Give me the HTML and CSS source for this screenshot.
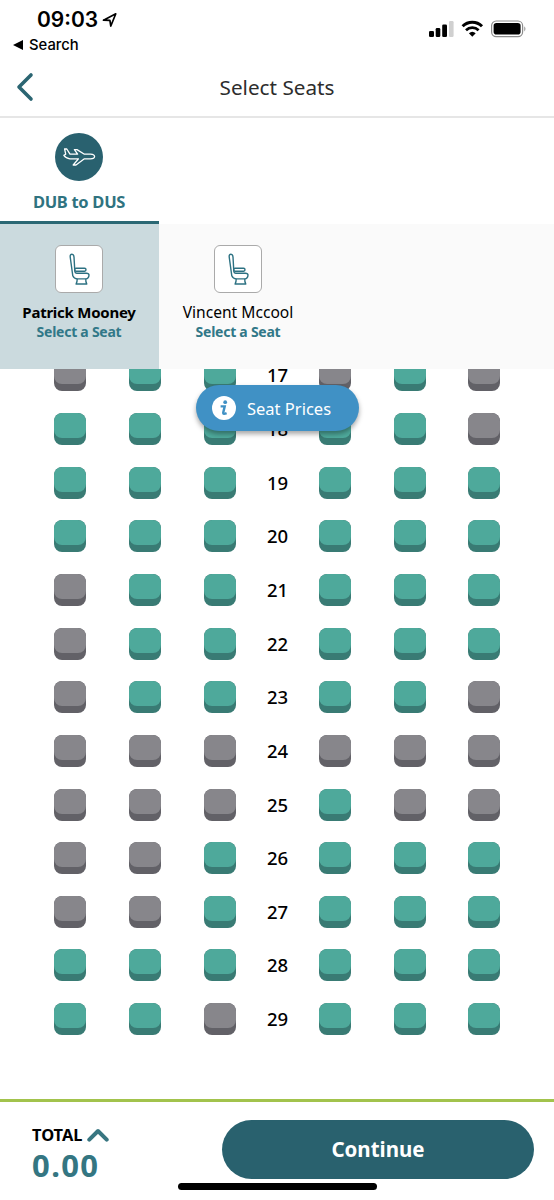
FILE: index.html
```
<!DOCTYPE html>
<html lang="en">
	<head>
		<meta charset="utf-8">
		<title>Select Seats</title>
		<link rel="stylesheet" href="styles.css">
	</head>
	<body>
		<div class="status-bar">
			<div class="status-left">
				<div class="clock">
					<span>09:03</span>
					<svg width="16" height="16" viewBox="0 0 16 16"><path d="M1.5 8.2 L13.8 1.8 L8.8 14 L7.9 8.3 Z" fill="none" stroke="#000" stroke-width="1.7" stroke-linejoin="round"/></svg>
				</div>
				<div class="back-app">
					<svg width="10" height="10" viewBox="0 0 10 10"><path d="M0 5 L10 0 V10 Z"/></svg>
					<span>Search</span>
				</div>
			</div>
			<svg class="status-icons" width="98" height="18" viewBox="0 0 98 18">
				<rect x="0" y="11" width="5" height="6" rx="1.3"/>
				<rect x="6.7" y="8" width="4.6" height="9" rx="1.3"/>
				<rect x="13.2" y="4.5" width="4.8" height="12.5" rx="1.3"/>
				<rect x="20" y="1" width="4.6" height="16" rx="1.3" fill="#d0d0d0"/>
				<path d="M33.6 6.3 A13.8 13.8 0 0 1 53 6.3" fill="none" stroke="#000" stroke-width="3"/>
				<path d="M37 10.2 A9 9 0 0 1 49.6 10.2" fill="none" stroke="#000" stroke-width="2.7"/>
				<path d="M39.9 13.3 A5 5 0 0 1 46.7 13.3 L43.3 16.8 Z"/>
				<rect x="62.6" y="1" width="31" height="15.6" rx="4.6" fill="none" stroke="#8c8c8c" stroke-width="1.2"/>
				<rect x="64.6" y="3" width="27" height="11.6" rx="2.8"/>
				<path d="M95.3 6.2 Q97.6 8.8 95.3 11.4 Z" fill="#8c8c8c"/>
			</svg>
		</div>

		<div class="nav-bar">
			<svg class="nav-back" width="18" height="30" viewBox="0 0 18 30"><path d="M15 3 L3 15 L15 27" fill="none" stroke="#2b6572" stroke-width="3.6" stroke-linecap="round" stroke-linejoin="round"/></svg>
			<h1>Select Seats</h1>
		</div>

		<div class="flight-tab">
			<div class="flight-icon">
				<svg width="34" height="20" viewBox="0 0 34 20"><path d="M2.6 2 H4.8 L8 7.2 H15.6 L12.4 2.6 H15 L22.4 7.2 H28.5 Q32.6 7.5 32.6 9.7 Q32.4 11.6 28.5 11.8 H22.4 L14 18 H11.2 L16.4 11.8 H8 Q4 11.4 1.8 8.4 L3.7 7.2 Z" fill="none" stroke="#fff" stroke-width="1.3" stroke-linejoin="round"/></svg>
			</div>
			<div class="flight-route">DUB to DUS</div>
		</div>

		<div class="passengers">
			<div class="passenger selected">
				<div class="passenger-icon">
					<svg width="22" height="33" viewBox="0 0 22 33"><g fill="none" stroke="#2c7182" stroke-width="1.4" stroke-linejoin="round"><path d="M2.2 4 Q2 1.2 4 1.2 Q5.8 1.2 6 4 L6.8 18 Q7 20.3 9 20.3 H18.3 Q21 20.4 21 22 Q20.8 25.7 17.8 25.9 H9.2 Q6 25.8 4.8 22.8 Z"/><rect x="6.6" y="15.3" width="11.4" height="2.9" rx="1.4"/><path d="M9.2 25.9 Q9.3 28.6 8.1 31 H18.8 Q17.5 28.7 17.8 25.9"/></g></svg>
				</div>
				<div class="passenger-name">Patrick Mooney</div>
				<div class="passenger-seat">Select a Seat</div>
			</div>
			<div class="passenger">
				<div class="passenger-icon">
					<svg width="22" height="33" viewBox="0 0 22 33"><g fill="none" stroke="#2c7182" stroke-width="1.4" stroke-linejoin="round"><path d="M2.2 4 Q2 1.2 4 1.2 Q5.8 1.2 6 4 L6.8 18 Q7 20.3 9 20.3 H18.3 Q21 20.4 21 22 Q20.8 25.7 17.8 25.9 H9.2 Q6 25.8 4.8 22.8 Z"/><rect x="6.6" y="15.3" width="11.4" height="2.9" rx="1.4"/><path d="M9.2 25.9 Q9.3 28.6 8.1 31 H18.8 Q17.5 28.7 17.8 25.9"/></g></svg>
				</div>
				<div class="passenger-name">Vincent Mccool</div>
				<div class="passenger-seat">Select a Seat</div>
			</div>
		</div>

		<div class="seat-map">
			<button class="seat-prices">
				<svg width="24" height="24" viewBox="0 0 24 24"><circle cx="12" cy="12" r="12" fill="#fff"/><circle cx="13.2" cy="6.2" r="1.9" fill="#4091c5"/><path d="M8.6 10.4 H12.7 L11.2 16.6 Q10.9 18.8 14.6 17.2" fill="none" stroke="#4091c5" stroke-width="2.4"/></svg>
				<span>Seat Prices</span>
			</button>
			<div class="seat-rows">
				<div class="row"><i class="seat taken"></i><i class="seat"></i><i class="seat"></i><b>17</b><i class="seat taken"></i><i class="seat"></i><i class="seat taken"></i></div>
				<div class="row"><i class="seat"></i><i class="seat"></i><i class="seat"></i><b>18</b><i class="seat"></i><i class="seat"></i><i class="seat taken"></i></div>
				<div class="row"><i class="seat"></i><i class="seat"></i><i class="seat"></i><b>19</b><i class="seat"></i><i class="seat"></i><i class="seat"></i></div>
				<div class="row"><i class="seat"></i><i class="seat"></i><i class="seat"></i><b>20</b><i class="seat"></i><i class="seat"></i><i class="seat"></i></div>
				<div class="row"><i class="seat taken"></i><i class="seat"></i><i class="seat"></i><b>21</b><i class="seat"></i><i class="seat"></i><i class="seat"></i></div>
				<div class="row"><i class="seat taken"></i><i class="seat"></i><i class="seat"></i><b>22</b><i class="seat"></i><i class="seat"></i><i class="seat"></i></div>
				<div class="row"><i class="seat taken"></i><i class="seat"></i><i class="seat"></i><b>23</b><i class="seat"></i><i class="seat"></i><i class="seat taken"></i></div>
				<div class="row"><i class="seat taken"></i><i class="seat taken"></i><i class="seat taken"></i><b>24</b><i class="seat taken"></i><i class="seat taken"></i><i class="seat taken"></i></div>
				<div class="row"><i class="seat taken"></i><i class="seat taken"></i><i class="seat taken"></i><b>25</b><i class="seat"></i><i class="seat taken"></i><i class="seat taken"></i></div>
				<div class="row"><i class="seat taken"></i><i class="seat taken"></i><i class="seat"></i><b>26</b><i class="seat"></i><i class="seat"></i><i class="seat"></i></div>
				<div class="row"><i class="seat taken"></i><i class="seat taken"></i><i class="seat"></i><b>27</b><i class="seat"></i><i class="seat"></i><i class="seat"></i></div>
				<div class="row"><i class="seat"></i><i class="seat"></i><i class="seat"></i><b>28</b><i class="seat"></i><i class="seat"></i><i class="seat"></i></div>
				<div class="row"><i class="seat"></i><i class="seat"></i><i class="seat taken"></i><b>29</b><i class="seat"></i><i class="seat"></i><i class="seat"></i></div>
			</div>
		</div>

		<div class="footer">
			<div class="total">
				<div class="total-label">
					<span>TOTAL</span>
					<svg width="22" height="14" viewBox="0 0 22 14"><path d="M2.3 11.7 L11 3 L19.7 11.7" fill="none" stroke="#387681" stroke-width="4" stroke-linecap="round" stroke-linejoin="round"/></svg>
				</div>
				<div class="total-price">0.00</div>
			</div>
			<button class="continue">Continue</button>
			<div class="home-indicator"></div>
		</div>
	</body>
</html>
```

FILE: styles.css
```
* {
	box-sizing: border-box;
}
body {
	margin: 0;
	width: 554px;
	height: 1200px;
	overflow: hidden;
	display: flex;
	flex-direction: column;
	background-color: #fff;
	color: #000;
	font-family: "Noto Sans", "Open Sans", sans-serif;
}
svg {
	display: block;
	flex: none;
}
button {
	border: none;
	padding: 0;
	font-family: inherit;
	color: #fff;
}

/* status bar */
.status-bar {
	height: 58px;
	flex: none;
	display: flex;
	justify-content: space-between;
	padding: 8px 27px 0 13px;
	font-family: Inter, sans-serif;
}
.clock {
	display: flex;
	align-items: center;
	gap: 4px;
	height: 23px;
	padding-left: 24px;
	font-size: 21px;
	font-weight: 600;
}
.back-app {
	display: flex;
	align-items: center;
	gap: 6px;
	height: 27px;
	font-size: 14.8px;
	font-weight: 500;
}
.status-icons {
	margin-top: 12px;
}

/* title bar */
.nav-bar {
	height: 60px;
	flex: none;
	display: grid;
	grid-template-columns: 60px 1fr 60px;
	align-items: center;
	border-bottom: 2px solid #e6e6e6;
}
.nav-back {
	margin-left: 16px;
}
.nav-bar h1 {
	margin: 0;
	text-align: center;
	font-size: 20.7px;
	font-weight: 400;
	color: #2d2d2d;
}

/* flight */
.flight-tab {
	width: 159px;
	height: 106px;
	flex: none;
	display: flex;
	flex-direction: column;
	align-items: center;
	padding: 15px 1px 0 0;
	border-bottom: 3px solid #2b6874;
}
.flight-icon {
	width: 48px;
	height: 48px;
	display: flex;
	align-items: center;
	justify-content: center;
	border-radius: 50%;
	background-color: #29616f;
}
.flight-route {
	margin-top: 9px;
	line-height: 24px;
	font-size: 16.5px;
	font-weight: 700;
	letter-spacing: -0.3px;
	color: #2f7380;
}

/* passengers */
.passengers {
	height: 145px;
	flex: none;
	display: flex;
	background-color: #fafafa;
}
.passenger {
	width: 159px;
	display: flex;
	flex-direction: column;
	align-items: center;
	padding: 21px 1px 0 0;
	white-space: nowrap;
}
.passenger.selected {
	background-color: #cbdade;
}
.passenger-icon {
	width: 48px;
	height: 48px;
	display: flex;
	align-items: center;
	justify-content: center;
	border: 1px solid #aaa;
	border-radius: 6px;
	background-color: #fff;
}
.passenger-name {
	margin-top: 9px;
	line-height: 20px;
	font-size: 15.6px;
}
.selected .passenger-name {
	font-weight: 700;
	font-size: 15px;
	letter-spacing: -0.25px;
}
.passenger-seat {
	line-height: 20px;
	font-size: 14px;
	font-weight: 700;
	letter-spacing: -0.25px;
	color: #317888;
}

/* seats */
.seat-map {
	position: relative;
	height: 730px;
	flex: none;
	overflow: hidden;
}
.seat-rows {
	margin-top: -9.6px;
}
.row {
	height: 53.65px;
	display: grid;
	grid-template-columns: 75px 75px 32px 83px 75px 74px 32px;
	padding-left: 54px;
}
.row b {
	line-height: 32px;
	text-align: center;
	font-size: 18.5px;
	font-weight: 500;
}
.seat {
	width: 32px;
	height: 32px;
	border-radius: 8px;
	background-color: #397b74;
	overflow: hidden;
}
.seat::before {
	content: "";
	display: block;
	height: 25px;
	border-radius: 8px;
	background-color: #4ea99b;
}
.seat.taken {
	background-color: #626167;
}
.seat.taken::before {
	background-color: #87868b;
}
.seat-prices {
	position: absolute;
	top: 16px;
	left: 196px;
	width: 163px;
	height: 46px;
	display: flex;
	align-items: center;
	gap: 11px;
	padding-left: 16px;
	border-radius: 23px;
	background-color: #4091c5;
	box-shadow: 0 3px 5px rgba(0, 0, 0, 0.35);
	font-size: 16.5px;
	white-space: nowrap;
}

/* footer */
.footer {
	position: relative;
	height: 101px;
	display: flex;
	justify-content: space-between;
	border-top: 3px solid #a2c34c;
	padding: 18px 20px 0 32px;
}
.total {
	padding-top: 3px;
}
.total-label {
	display: flex;
	align-items: center;
	gap: 5px;
	line-height: 24px;
	font-size: 16.4px;
	font-weight: 700;
}
.total-price {
	line-height: 36px;
	font-size: 31px;
	font-weight: 700;
	letter-spacing: 1.4px;
	color: #347682;
}
.continue {
	width: 312px;
	height: 59px;
	padding-bottom: 2px;
	border-radius: 29.5px;
	background-color: #29616e;
	font-size: 20.5px;
	font-weight: 700;
}
.home-indicator {
	position: absolute;
	left: 178px;
	bottom: 10px;
	width: 199px;
	height: 7px;
	border-radius: 4px;
	background-color: #000;
}
```
